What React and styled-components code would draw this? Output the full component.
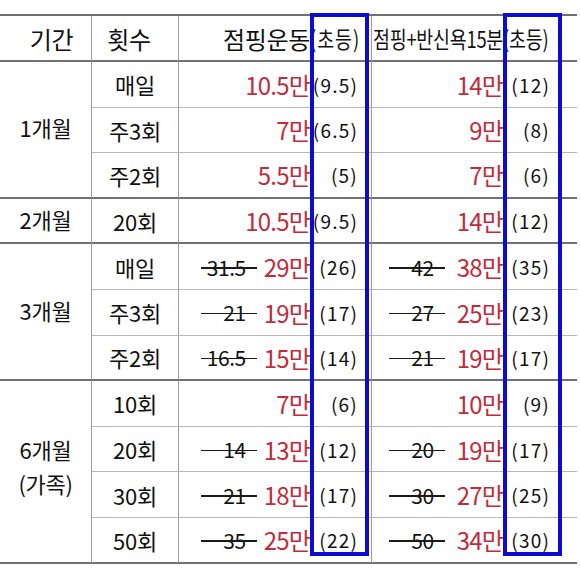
import React from 'react';
import styled, { createGlobalStyle } from 'styled-components';

const GlobalStyle = createGlobalStyle`
  html, body {
    margin: 0;
    padding: 0;
    background: #ffffff;
  }

  body {
    font-family: "Noto Sans CJK KR", "Noto Sans", sans-serif;
    font-weight: 400;
    color: #111111;
  }
`;

const Page = styled.div`
  position: relative;
  width: 580px;
  height: 582px;
  padding-top: 14px;
  box-sizing: border-box;
  overflow: hidden;
`;

const Table = styled.div`
  display: grid;
  grid-template-columns: 92px 87px 193px 205px;
  grid-template-rows: 46px repeat(11, 45.6px);
  width: 577px;
  border-top: 2px solid #707070;
`;

const Cell = styled.div`
  box-sizing: border-box;
  display: flex;
  align-items: center;
  justify-content: ${({ $align }) => $align || 'center'};
  min-width: 0;
  padding: ${({ $pad }) => $pad || '0'};
  border-bottom: ${({ $strong }) => ($strong ? '2px solid #727272' : '1px solid #b8b8b8')};
  border-right: ${({ $last }) => ($last ? 'none' : '1.5px solid #9c9c9c')};
  font-size: 22px;
  letter-spacing: -0.3px;
  white-space: nowrap;
`;

const HeadText = styled.span`
  font-size: 24px;
  letter-spacing: -0.3px;
`;

const Squeezed = styled.span`
  display: inline-block;
  font-size: 23px;
  transform: scaleX(${({ $scale }) => $scale || 0.78});
  transform-origin: left center;
`;

const PeriodText = styled.span`
  display: block;
  text-align: center;
  line-height: 34px;
  margin-top: ${({ $lines }) => ($lines > 1 ? -10 : -4)}px;
`;

const PricePart = styled.div`
  flex: 1;
  display: flex;
  align-items: center;
  justify-content: flex-end;
`;

const KidsPart = styled.div`
  box-sizing: border-box;
  flex: none;
  width: ${({ $width }) => $width}px;
  padding-right: ${({ $right }) => $right}px;
  text-align: ${({ $left }) => ($left ? 'left' : 'right')};
  font-size: 19px;
  letter-spacing: 1.2px;
`;

const NewPrice = styled.span`
  color: #c22c3a;
  font-size: 24px;
  letter-spacing: -0.8px;
`;

const OldPrice = styled.span`
  position: relative;
  box-sizing: border-box;
  display: inline-block;
  width: 56px;
  margin-right: ${({ $gap }) => $gap}px;
  padding-right: 11px;
  text-align: right;
  font-size: 21px;
  letter-spacing: -0.5px;

  &::after {
    content: '';
    position: absolute;
    left: 0;
    right: 0;
    top: 52%;
    height: 1.5px;
    background: #1a1a1a;
  }
`;

const Highlight = styled.div`
  position: absolute;
  top: 13px;
  left: ${({ $left }) => $left}px;
  width: 59px;
  height: 543px;
  box-sizing: border-box;
  border: 4px solid #0b0bd2;
  pointer-events: none;
`;

const columns = {
  a: { kidsWidth: 61, kidsRight: 13, gap: 7 },
  b: { kidsWidth: 74, kidsRight: 27, gap: 12 },
};

const groups = [
  {
    period: ['1개월'],
    rows: [
      { count: '매일', a: ['', '10.5만', '(9.5)'], b: ['', '14만', '(12)'] },
      { count: '주3회', a: ['', '7만', '(6.5)'], b: ['', '9만', '(8)'] },
      { count: '주2회', a: ['', '5.5만', '(5)'], b: ['', '7만', '(6)'] },
    ],
  },
  {
    period: ['2개월'],
    rows: [{ count: '20회', a: ['', '10.5만', '(9.5)'], b: ['', '14만', '(12)'] }],
  },
  {
    period: ['3개월'],
    rows: [
      { count: '매일', a: ['31.5', '29만', '(26)'], b: ['42', '38만', '(35)'] },
      { count: '주3회', a: ['21', '19만', '(17)'], b: ['27', '25만', '(23)'] },
      { count: '주2회', a: ['16.5', '15만', '(14)'], b: ['21', '19만', '(17)'] },
    ],
  },
  {
    period: ['6개월', '(가족)'],
    rows: [
      { count: '10회', a: ['', '7만', '(6)'], b: ['', '10만', '(9)'] },
      { count: '20회', a: ['14', '13만', '(12)'], b: ['20', '19만', '(17)'] },
      { count: '30회', a: ['21', '18만', '(17)'], b: ['30', '27만', '(25)'] },
      { count: '50회', a: ['35', '25만', '(22)'], b: ['50', '34만', '(30)'] },
    ],
  },
];

const PriceCell = ({ value, column, strong, last }) => {
  const [old, price, kids] = value;
  const { kidsWidth, kidsRight, gap } = columns[column];
  return (
    <Cell $strong={strong} $last={last}>
      <PricePart>
        {old ? <OldPrice $gap={gap}>{old}</OldPrice> : null}
        <NewPrice>{price}</NewPrice>
      </PricePart>
      <KidsPart $width={kidsWidth} $right={kidsRight}>
        {kids}
      </KidsPart>
    </Cell>
  );
};

const App = () => (
  <Page>
    <GlobalStyle />
    <Table>
      <Cell $strong $pad="0 0 0 12px">
        <HeadText>기간</HeadText>
      </Cell>
      <Cell $strong $pad="0 12px 0 0">
        <HeadText>횟수</HeadText>
      </Cell>
      <Cell $strong>
        <PricePart>
          <HeadText>점핑운동</HeadText>
        </PricePart>
        <KidsPart $width={61} $right={0} $left>
          <Squeezed $scale={0.8}>(초등)</Squeezed>
        </KidsPart>
      </Cell>
      <Cell $strong $last $align="flex-start" $pad="0 0 0 1px">
        <Squeezed $scale={0.8}>점핑+반신욕15분(초등)</Squeezed>
      </Cell>

      {groups.map((group) =>
        group.rows.map((row, i) => {
          const strong = i === group.rows.length - 1;
          return (
            <React.Fragment key={`${group.period[0]}-${i}`}>
              {i === 0 ? (
                <Cell $strong style={{ gridRow: `span ${group.rows.length}` }}>
                  <PeriodText $lines={group.period.length}>
                    {group.period.map((line) => (
                      <span key={line}>
                        {line}
                        <br />
                      </span>
                    ))}
                  </PeriodText>
                </Cell>
              ) : null}
              <Cell $strong={strong}>{row.count}</Cell>
              <PriceCell value={row.a} column="a" strong={strong} />
              <PriceCell value={row.b} column="b" strong={strong} last />
            </React.Fragment>
          );
        }),
      )}
    </Table>
    <Highlight $left={310} />
    <Highlight $left={503} />
  </Page>
);

export default App;
